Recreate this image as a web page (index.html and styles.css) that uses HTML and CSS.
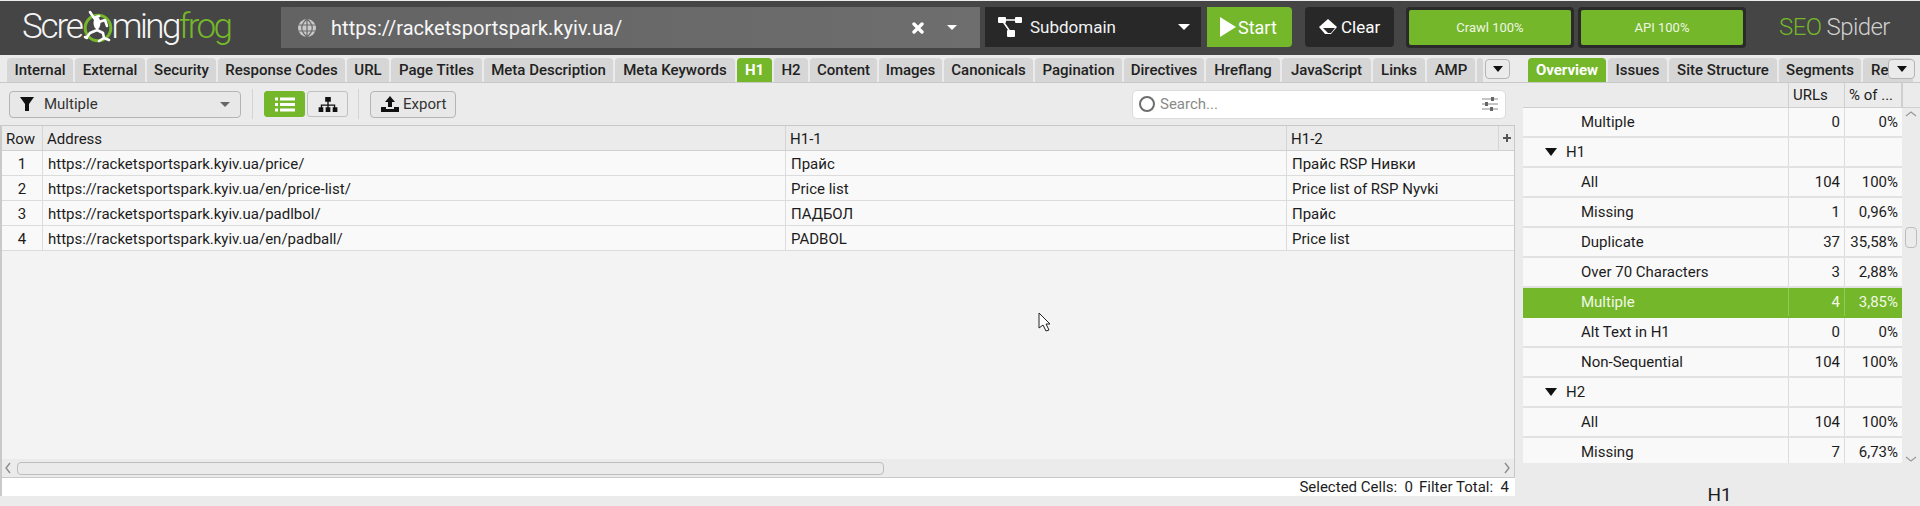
FILE: index.html
```html
<!DOCTYPE html>
<html lang="en">
<head>
<meta charset="utf-8">
<title>Screaming Frog SEO Spider</title>
<link rel="stylesheet" href="styles.css">
</head>
<body>
<div class="app">
  <header class="topbar">
    <div class="logo"><span class="logo-text">Scre</span><svg class="logo-frog" viewBox="0 0 34 34"><circle cx="17" cy="18" r="12.800" fill="none" stroke="#74b72a" stroke-width="3"/><path d="M13 8l4 4-1 8M9 2l4 6 5-2M18 12l6-2 2 6M16 20l-7 3-3 4M16 20l6 3 1 5M6 28l-2-1M23 28l5 2M18 31l5-3" fill="none" stroke="#fff" stroke-width="2.600" stroke-linecap="round" stroke-linejoin="round"/><ellipse cx="16" cy="13" rx="3.500" ry="6" fill="#fff"/></svg><span class="logo-text logo-ming">ming</span><span class="logo-text logo-green logo-ming">frog</span></div>
    <div class="urlbar">
      <svg class="globe" viewBox="0 0 20 20"><circle cx="10" cy="10" r="9" fill="#c9c9c9"/><path d="M1 7h18M1 13h18M10 1v18M10 1c-7 6-7 12 0 18M10 1c7 6 7 12 0 18" fill="none" stroke="#6a6a6a" stroke-width="1.200"/></svg>
      <span class="url">https://racketsportspark.kyiv.ua/</span>
      <svg class="xmark" viewBox="0 0 12 12"><path d="M2 2l8 8M10 2l-8 8" stroke="#fff" stroke-width="3.400" stroke-linecap="round"/></svg>
      <span class="caret caret-url"></span>
    </div>
    <div class="mode">
      <svg class="mode-icon" viewBox="0 0 24 20"><path d="M4 3h16M4 3l9 13" stroke="#fff" stroke-width="1.600" fill="none"/><rect width="8" height="6" fill="#fff" rx="1"/><rect x="17" width="7" height="6" fill="#fff" rx="1"/><rect x="9" y="13" width="8" height="7" fill="#fff" rx="1"/></svg>
      <span class="mode-label">Subdomain</span>
      <span class="caret"></span>
    </div>
    <button class="start"><svg class="start-icon" viewBox="0 0 16 20"><path d="M0 0l16 10L0 20z" fill="#fff"/></svg>Start</button>
    <button class="clear"><svg class="clear-icon" viewBox="0 0 20 16"><path d="M10 0l9 8-6 7H7L1 8z" fill="#fff"/><path d="M5 9l5 5h3l4-5z" fill="#282828"/></svg>Clear</button>
    <div class="progress first"><span class="progress-fill">Crawl 100%</span></div>
    <div class="progress"><span class="progress-fill">API 100%</span></div>
    <div class="brand"><span class="logo-green">SEO</span> Spider</div>
  </header>

  <div class="main">
    <section class="left">
      <nav class="tabs">
        <span class="tab w66">Internal</span><span class="tab w70">External</span><span class="tab w69">Security</span><span class="tab w127">Response Codes</span><span class="tab w42">URL</span><span class="tab w91">Page Titles</span><span class="tab w129">Meta Description</span><span class="tab w120">Meta Keywords</span><span class="tab active w35">H1</span><span class="tab w34">H2</span><span class="tab w67">Content</span><span class="tab w63">Images</span><span class="tab w89">Canonicals</span><span class="tab w87">Pagination</span><span class="tab w80">Directives</span><span class="tab w74">Hreflang</span><span class="tab w89">JavaScript</span><span class="tab w52">Links</span><span class="tab w48">AMP</span><span class="tab w6"></span>
        <span class="tab-more"><span class="caret caret-dark"></span></span>
      </nav>
      <div class="toolbar">
        <div class="filter">
          <svg class="filter-icon" viewBox="0 0 14 14"><path d="M0 0h14L9 7v7H5V7z" fill="#111"/></svg>
          <span class="filter-label">Multiple</span>
          <span class="caret caret-gray"></span>
        </div>
        <span class="sep"></span>
        <span class="view view-on"><svg class="view-icon" viewBox="0 0 20 14"><path d="M0 0h3v3H0zM5 0h15v3H5zM0 5.500h3v3H0zM5 5.500h15v3H5zM0 11h3v3H0zM5 11h15v3H5z" fill="#fff"/></svg></span>
        <span class="view"><svg class="view-icon" viewBox="0 0 20 16"><path d="M7 0h6v5H7zM0 11h5v5H0zM7.500 11h5v5h-5zM15 11h5v5h-5zM9.300 5h1.400v3h7v3h-1.400V9.400h-5.600V11H9.300V9.400H3.700V11H2.300V8h7z" fill="#111"/></svg></span>
        <span class="sep sep-b"></span>
        <button class="export"><svg class="export-icon" viewBox="0 0 18 16"><path d="M9 0l5 6h-3v5H7V6H4zM0 11h5v2h8v-2h5v5H0z" fill="#111"/></svg>Export</button>
        <div class="search">
          <span class="search-ring"></span>
          <span class="search-text">Search...</span>
          <svg class="search-opts" viewBox="0 0 16 14"><path d="M0 2h16M0 7h16M0 12h16" stroke="#8a8a8a" stroke-width="1"/><path d="M9 0h3v4H9zM3 5h3v4H3zM8 10h3v4H8z" fill="#666"/></svg>
        </div>
      </div>
      <div class="grid-wrap">
        <div class="grow head">
          <span class="cell">Row</span><span class="cell">Address</span><span class="cell">H1-1</span><span class="cell">H1-2</span><span class="cell plus"><svg class="plus-icon" viewBox="0 0 8 8"><path d="M3 0h2v3h3v2H5v3H3V5H0V3h3z" fill="#555"/></svg></span>
        </div>
        <div class="grow row"><span class="cell num">1</span><span class="cell">https://racketsportspark.kyiv.ua/price/</span><span class="cell">Прайс</span><span class="cell last">Прайс RSP Нивки</span></div>
        <div class="grow row"><span class="cell num">2</span><span class="cell">https://racketsportspark.kyiv.ua/en/price-list/</span><span class="cell">Price list</span><span class="cell last">Price list of RSP Nyvki</span></div>
        <div class="grow row"><span class="cell num">3</span><span class="cell">https://racketsportspark.kyiv.ua/padlbol/</span><span class="cell">ПАДБОЛ</span><span class="cell last">Прайс</span></div>
        <div class="grow row"><span class="cell num">4</span><span class="cell">https://racketsportspark.kyiv.ua/en/padball/</span><span class="cell">PADBOL</span><span class="cell last">Price list</span></div>
        <div class="grid-empty"></div>
        <div class="hscroll">
          <svg class="chev" viewBox="0 0 8 12"><path d="M6 1L2 6l4 5" fill="none" stroke="#888" stroke-width="1.300"/></svg>
          <span class="hthumb"></span>
          <span class="hspace"></span>
          <svg class="chev" viewBox="0 0 8 12"><path d="M2 1l4 5-4 5" fill="none" stroke="#888" stroke-width="1.300"/></svg>
        </div>
      </div>
      <div class="status"><span>Selected Cells:&nbsp; 0</span><span>Filter Total:&nbsp; 4</span></div>
    </section>

    <section class="right">
      <nav class="tabs tabs-right">
        <span class="tab active w78">Overview</span><span class="tab w59">Issues</span><span class="tab w108">Site Structure</span><span class="tab w82">Segments</span><span class="tab w50 clip">Re</span>
        <span class="tab-more tab-more-r"><span class="caret caret-dark"></span></span>
      </nav>
      <div class="over-wrap">
        <div class="over-table">
          <div class="orow ohead"><span class="ocell"></span><span class="ocell">URLs</span><span class="ocell">% of ...</span></div>
          <div class="orows">
            <div class="orow"><span class="ocell leaf">Multiple</span><span class="ocell n">0</span><span class="ocell n">0%</span></div>
            <div class="orow"><span class="ocell group"><i class="tri"></i>H1</span><span class="ocell n"></span><span class="ocell n"></span></div>
            <div class="orow"><span class="ocell leaf">All</span><span class="ocell n">104</span><span class="ocell n">100%</span></div>
            <div class="orow"><span class="ocell leaf">Missing</span><span class="ocell n">1</span><span class="ocell n">0,96%</span></div>
            <div class="orow"><span class="ocell leaf">Duplicate</span><span class="ocell n">37</span><span class="ocell n">35,58%</span></div>
            <div class="orow"><span class="ocell leaf">Over 70 Characters</span><span class="ocell n">3</span><span class="ocell n">2,88%</span></div>
            <div class="orow sel"><span class="ocell leaf">Multiple</span><span class="ocell n">4</span><span class="ocell n">3,85%</span></div>
            <div class="orow"><span class="ocell leaf">Alt Text in H1</span><span class="ocell n">0</span><span class="ocell n">0%</span></div>
            <div class="orow"><span class="ocell leaf">Non-Sequential</span><span class="ocell n">104</span><span class="ocell n">100%</span></div>
            <div class="orow"><span class="ocell group"><i class="tri"></i>H2</span><span class="ocell n"></span><span class="ocell n"></span></div>
            <div class="orow"><span class="ocell leaf">All</span><span class="ocell n">104</span><span class="ocell n">100%</span></div>
            <div class="orow"><span class="ocell leaf">Missing</span><span class="ocell n">7</span><span class="ocell n">6,73%</span></div>
          </div>
        </div>
        <div class="vscroll">
          <div class="vhead"></div>
          <svg class="vchev" viewBox="0 0 12 8"><path d="M1 6l5-4 5 4" fill="none" stroke="#999" stroke-width="1.200"/></svg>
          <span class="vthumb"></span>
          <svg class="vchev vchev-b" viewBox="0 0 12 8"><path d="M1 2l5 4 5-4" fill="none" stroke="#999" stroke-width="1.200"/></svg>
        </div>
      </div>
      <div class="detail-title">H1</div>
    </section>
  </div>

  <svg class="cursor" viewBox="0 0 13 20"><path d="M1 1v15l4-3 3 6 3-1-3-6h4z" fill="#fff" stroke="#222" stroke-width="1"/></svg>
</div>
</body>
</html>
```
FILE: styles.css
```css
* { box-sizing: border-box; }
html, body { margin: 0; padding: 0; }
body { width: 1920px; height: 506px; overflow: hidden; background: #ebebeb; font-family: Roboto, "Noto Sans", sans-serif; font-size: 15px; color: #1c1c1c; }
.app { position: relative; width: 1920px; height: 506px; display: flex; flex-direction: column; }

/* top bar */
.topbar { height: 55px; border-top: 1px solid #ececec; background: #454545; display: flex; align-items: flex-start; padding: 6px 0 0 22px; flex: none; }
.logo { width: 259px; height: 40px; display: flex; align-items: center; flex: none; }
.logo-text { font-size: 35px; font-weight: 300; color: #f5f5f5; letter-spacing: -2.2px; line-height: 40px; display: inline-block; }
.logo-ming { letter-spacing: -2.6px; }
.logo-green { color: #74b72a; }
.logo-frog { width: 34px; height: 34px; flex: none; margin: 0 -3px 0 -1px; }
.urlbar { width: 699px; height: 41px; background: linear-gradient(90deg, #636363, #6e6e6e); display: flex; align-items: center; padding: 0 23px 0 16px; flex: none; }
.globe { width: 20px; height: 20px; flex: none; }
.url { font-size: 20px; letter-spacing: 0.05px; color: #f7f7f7; margin-left: 14px; flex: 1; }
.xmark { width: 12px; height: 12px; margin-right: 23px; }
.caret { width: 0; height: 0; border-left: 6px solid transparent; border-right: 6px solid transparent; border-top: 6px solid #fff; flex: none; }
.caret-url { border-left-width: 5px; border-right-width: 5px; border-top-width: 5px; }
.caret-gray { border-top-color: #666; border-left-width: 5px; border-right-width: 5px; border-top-width: 5px; }
.caret-dark { border-top-color: #111; border-left-width: 5px; border-right-width: 5px; border-top-width: 6px; }
.mode { width: 216px; height: 40px; margin-left: 5px; background: #282828; display: flex; align-items: center; padding: 0 11px 0 13px; flex: none; color: #f2f2f2; }
.mode-icon { width: 24px; height: 20px; flex: none; }
.mode-label { font-size: 17px; margin-left: 8px; flex: 1; }
.start { width: 85px; height: 40px; margin-left: 6px; background: #74b72a; border: 0; border-radius: 0 4px 4px 0; color: #fff; font: 18px Roboto, sans-serif; display: flex; align-items: center; padding: 0 0 0 13px; flex: none; }
.start-icon { width: 16px; height: 20px; margin-right: 2px; }
.clear { width: 89px; height: 40px; margin-left: 13px; background: #282828; border: 0; border-radius: 4px; color: #fff; font: 17px Roboto, sans-serif; display: flex; align-items: center; padding: 0 0 0 13px; flex: none; }
.clear-icon { width: 20px; height: 16px; margin-right: 3px; }
.progress { width: 168px; height: 41px; padding: 3px 3px; background: #2a2a2a; border-radius: 4px; margin-left: 4px; flex: none; }
.progress.first { margin-left: 12px; }
.progress-fill { display: flex; align-items: center; justify-content: center; height: 100%; background: #74b72a; border-radius: 2px; color: #eef6e2; font-size: 13px; }
.brand { margin-left: 33px; font-size: 24px; letter-spacing: -0.6px; line-height: 41px; color: #d0d0d0; font-weight: 300; }

/* layout */
.main { flex: 1; display: grid; grid-template-columns: 1515px 405px; min-height: 0; }
.left, .right { display: flex; flex-direction: column; min-width: 0; }

/* tabs */
.tabs { height: 28px; padding: 3px 0 0 7px; display: flex; gap: 2px; align-items: stretch; border-bottom: 1px solid #c9c9c9; position: relative; flex: none; background: #ebebeb; }
.tabs-right { padding-left: 13px; }
.tab { background: #d6d6d6; border-radius: 4px 4px 0 0; font-size: 15px; font-weight: 500; color: #222; display: flex; align-items: center; justify-content: center; flex: none; white-space: nowrap; }
.tab.active { background: #74b72a; color: #fff; font-weight: 700; }
.clip { justify-content: flex-start; padding-left: 8px; }
.w6 { width: 6px; } .w34 { width: 34px; } .w35 { width: 35px; } .w42 { width: 42px; } .w48 { width: 48px; } .w50 { width: 50px; } .w52 { width: 52px; } .w59 { width: 59px; } .w63 { width: 63px; } .w66 { width: 66px; } .w67 { width: 67px; } .w69 { width: 69px; } .w70 { width: 70px; } .w74 { width: 74px; } .w78 { width: 78px; } .w80 { width: 80px; } .w82 { width: 82px; } .w87 { width: 87px; } .w89 { width: 89px; } .w91 { width: 91px; } .w108 { width: 108px; } .w120 { width: 120px; } .w127 { width: 127px; } .w129 { width: 129px; }
.tab-more { position: absolute; right: 5px; top: 4px; width: 25px; height: 20px; background: #ebebeb; border: 1px solid #b5b5b5; border-radius: 4px; display: flex; align-items: center; justify-content: center; }
.tab-more-r { right: 5px; width: 27px; }

/* toolbar */
.toolbar { height: 42px; display: flex; align-items: center; padding: 0 9px; flex: none; }
.filter { width: 232px; height: 27px; border: 1px solid #b5b5b5; border-radius: 4px; background: #e8e8e8; display: flex; align-items: center; padding: 0 10px 0 10px; flex: none; }
.filter-icon { width: 14px; height: 14px; flex: none; }
.filter-label { font-size: 15px; margin-left: 10px; flex: 1; color: #333; }
.sep { width: 1px; height: 30px; background: #d4d4d4; margin: 0 11px; flex: none; }
.sep-b { margin: 0 11px 0 10px; }
.view { width: 41px; height: 26px; margin-right: 2px; border: 1px solid #c0c0c0; border-radius: 3px; background: #ebebeb; display: flex; align-items: center; justify-content: center; flex: none; }
.view:nth-of-type(3) { margin-right: 0; }
.view-on { background: #74b72a; border-color: #74b72a; }
.view-icon { width: 20px; height: 15px; }
.export { width: 86px; height: 27px; border: 1px solid #b5b5b5; border-radius: 4px; background: #e8e8e8; font: 15px Roboto, sans-serif; color: #333; display: flex; align-items: center; padding: 0 0 0 10px; flex: none; }
.export-icon { width: 18px; height: 16px; margin-right: 4px; }
.search { width: 374px; height: 29px; margin-left: auto; background: #fff; border: 1px solid #dcdcdc; border-radius: 5px; display: flex; align-items: center; padding: 0 7px 0 6px; flex: none; }
.search-ring { width: 16px; height: 16px; border: 2px solid #6d6d6d; border-radius: 50%; flex: none; }
.search-text { color: #8a8a8a; margin-left: 5px; flex: 1; font-size: 15px; }
.search-opts { width: 16px; height: 14px; flex: none; }

/* results grid */
.grid-wrap { flex: 1; min-height: 0; margin-left: 2px; border: 1px solid #c9c9c9; border-left: 0; display: flex; flex-direction: column; background: #f3f3f3; box-shadow: -2px 0 0 #c9c9c9; }
.grow { display: grid; grid-template-columns: 41px 743px 501px 212px 1fr; flex: none; }
.head { height: 25px; background: #ebebeb; border-bottom: 1px solid #d0d0d0; }
.row { height: 25px; background: #f9f9f9; border-bottom: 1px solid #dcdcdc; }
.cell { padding: 2px 5px 0 4px; border-right: 1px solid #d4d4d4; display: flex; align-items: center; white-space: nowrap; overflow: hidden; }
.row .cell { padding-left: 5px; border-right-color: #dcdcdc; }
.row .num { justify-content: center; padding: 2px 0 0; }
.row .last { grid-column: span 2; border-right: 0; }
.plus { justify-content: center; padding: 0; border-right: 0; }
.plus-icon { width: 8px; height: 8px; }
.grid-empty { flex: 1; }
.hscroll { height: 18px; display: flex; align-items: center; background: #ebebeb; padding: 0 2px 0 1px; flex: none; }
.chev { width: 10px; height: 12px; flex: none; }
.hthumb { width: 867px; height: 13px; margin-left: 4px; border: 1px solid #bdbdbd; border-radius: 4px; background: #ebebeb; flex: none; }
.hspace { flex: 1; }
.status { height: 18px; margin-left: 2px; background: #fff; display: flex; justify-content: flex-end; align-items: center; gap: 6px; padding-right: 6px; font-size: 15px; flex: none; box-shadow: -2px 0 0 #c9c9c9; }
.left { padding-bottom: 10px; }

/* overview */
.over-wrap { display: flex; margin-left: 8px; height: 380px; flex: none; }
.over-table { width: 379px; flex: none; }
.orow { display: grid; grid-template-columns: 266px 56px 57px; height: 30px; background: #f9f9f9; border-bottom: 2px solid #e2e2e2; }
.ohead { height: 25px; background: #ebebeb; border-bottom: 1px solid #cfcfcf; }
.orows { height: 355px; overflow: hidden; }
.ocell { border-right: 1px solid #dcdcdc; display: flex; align-items: center; padding: 0 4px; white-space: nowrap; overflow: hidden; }
.ocell:last-child { border-right: 0; }
.ohead .ocell { border-right: 1px solid #cfcfcf; }
.leaf { padding-left: 58px; }
.group { padding-left: 22px; }
.tri { width: 0; height: 0; border-left: 6px solid transparent; border-right: 6px solid transparent; border-top: 8px solid #111; margin-right: 9px; }
.n { justify-content: flex-end; }
.sel { background: #74b72a; border-bottom-color: #74b72a; }
.sel .ocell { color: #f2f8e6; border-right-color: #93c85a; }
.vscroll { flex: 1; display: flex; flex-direction: column; align-items: center; background: #ebebeb; }
.vhead { width: 100%; height: 25px; border-left: 1px solid #cfcfcf; border-bottom: 1px solid #cfcfcf; flex: none; }
.vchev { width: 12px; height: 8px; margin-top: 2px; flex: none; }
.vthumb { width: 12px; height: 21px; margin-top: 109px; border: 1px solid #bdbdbd; border-radius: 4px; flex: none; }
.vchev-b { margin-top: auto; margin-bottom: 0; }
.detail-title { margin-left: 8px; width: 393px; text-align: center; font-size: 19px; padding-top: 20px; color: #1c1c1c; }

.cursor { position: absolute; left: 1038px; top: 312px; width: 13px; height: 20px; }
```
